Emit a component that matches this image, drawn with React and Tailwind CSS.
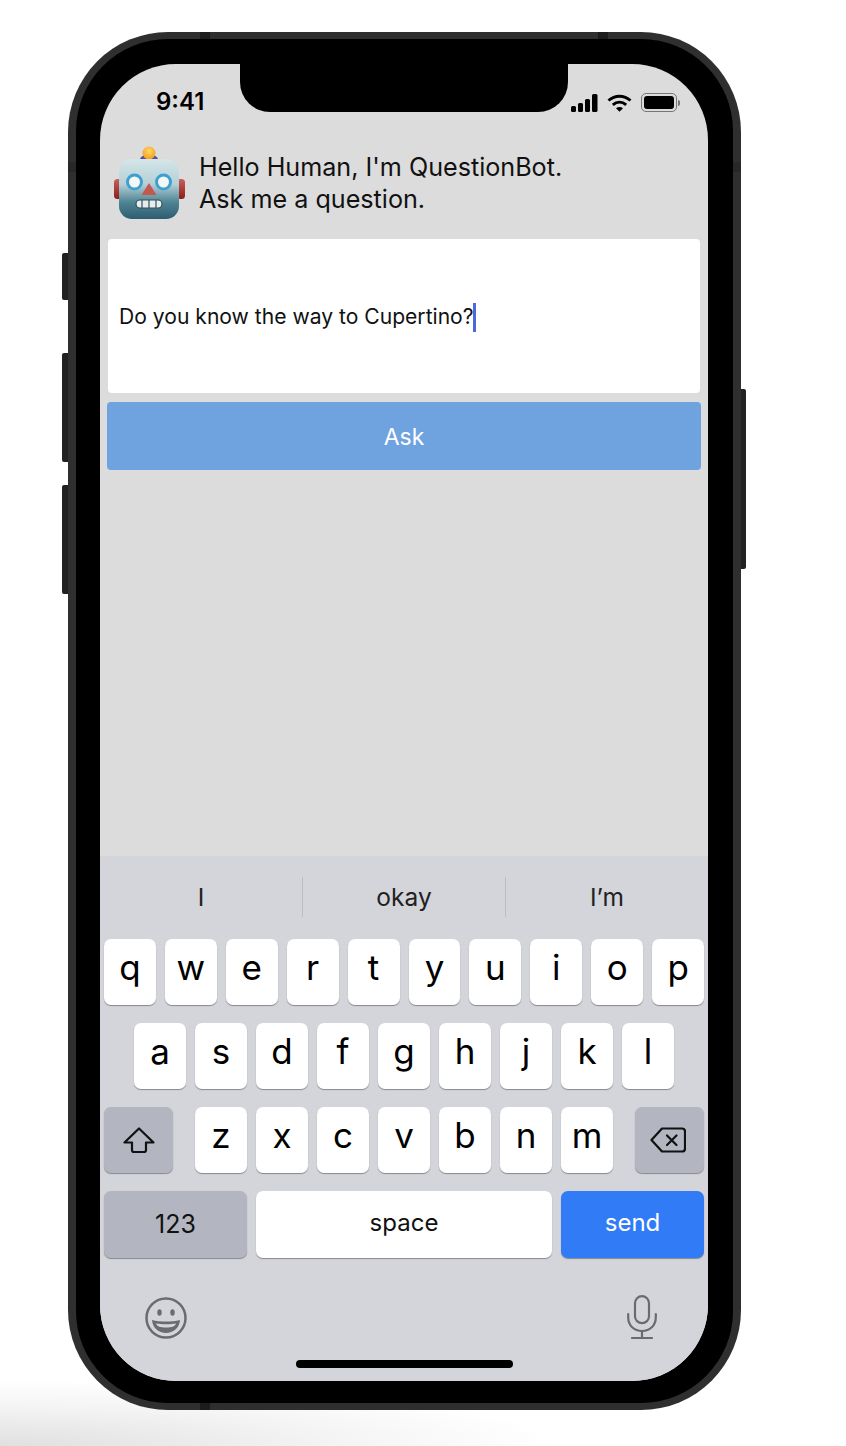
import React from "react";

const rows = [
  ["q", "w", "e", "r", "t", "y", "u", "i", "o", "p"],
  ["a", "s", "d", "f", "g", "h", "j", "k", "l"],
  ["z", "x", "c", "v", "b", "n", "m"],
];

function Key({ label }) {
  return (
    <div className="w-[52px] h-[66px] rounded-[7px] bg-white shadow-[0_1px_1px_#88898d] flex items-center justify-center text-[35px] leading-none font-[375] text-black pb-[9px]">
      {label}
    </div>
  );
}

function Robot() {
  return (
    <svg viewBox="113 145 73 75" className="w-[73px] h-[75px] shrink-0">
      <defs>
        <linearGradient id="head" x1="0" y1="0" x2="0" y2="1">
          <stop offset="0" stopColor="#d4e6e8" />
          <stop offset="0.42" stopColor="#b4d0d6" />
          <stop offset="0.72" stopColor="#4f8494" />
          <stop offset="1" stopColor="#2c5c70" />
        </linearGradient>
        <linearGradient id="ear" x1="0" y1="0" x2="0" y2="1">
          <stop offset="0" stopColor="#c9605a" />
          <stop offset="1" stopColor="#8a1d1a" />
        </linearGradient>
        <radialGradient id="knob" cx="0.5" cy="0.35" r="0.7">
          <stop offset="0" stopColor="#ffd75e" />
          <stop offset="1" stopColor="#ee9a1c" />
        </radialGradient>
      </defs>
      <rect x="114" y="178" width="8" height="20" rx="3.500" fill="url(#ear)" />
      <rect x="177" y="178" width="8" height="20" rx="3.500" fill="url(#ear)" />
      <path d="M140 158c1-3 5-4.500 9-4.500s8 1.500 9 4.500z" fill="#5f4f93" />
      <circle cx="149" cy="152" r="6.500" fill="url(#knob)" />
      <rect x="119" y="158" width="60" height="60" rx="13" fill="url(#head)" />
      <circle cx="134.500" cy="181" r="7" fill="#f2f7f8" stroke="#3fa0cf" strokeWidth="3" />
      <circle cx="163.500" cy="181" r="7" fill="#f2f7f8" stroke="#3fa0cf" strokeWidth="3" />
      <path d="M149 182l7.500 12h-15z" fill="#c4584f" />
      <rect x="136" y="199" width="26" height="8" rx="4" fill="#e8eeee" stroke="#33505c" strokeWidth="1.200" />
      <path d="M142 199v8M149 199v8M156 199v8" stroke="#33505c" strokeWidth="1.200" />
    </svg>
  );
}

function StatusIcons() {
  return (
    <div className="flex items-center gap-[9px]">
      <svg viewBox="0 0 27 18" className="w-[27px] h-[18px]" fill="#000">
        <rect x="0" y="12" width="5" height="6" rx="1.500" />
        <rect x="7" y="9" width="5" height="9" rx="1.500" />
        <rect x="14" y="5" width="5" height="13" rx="1.500" />
        <rect x="21" y="0" width="5.500" height="18" rx="1.500" />
      </svg>
      <svg viewBox="0 0 25 18" className="w-[25px] h-[18px]" fill="none" stroke="#000" strokeWidth="3">
        <path d="M1.500 6.500c6.500-5.800 15.500-5.800 22 0" />
        <path d="M5.800 10.800c4-3.400 9.400-3.400 13.400 0" />
        <path d="M12.500 17.800l3.500-3.600c-2-1.600-5-1.600-7 0z" fill="#000" stroke="none" />
      </svg>
      <div className="flex items-center gap-[1px]">
        <div className="w-[36px] h-[19px] rounded-[5px] border border-[#77777a] p-[2px]">
          <div className="w-full h-full rounded-[3px] bg-black" />
        </div>
        <div className="w-[2px] h-[6px] rounded-r bg-[#77777a]" />
      </div>
    </div>
  );
}

export default function App() {
  return (
    <div className="relative w-[846px] h-[1446px] overflow-hidden bg-white font-['Inter',sans-serif]">
      {/* Soft shadow under the phone */}
      <div className="absolute left-0 top-[1380px] w-[560px] h-[66px] bg-[radial-gradient(ellipse_100%_100%_at_0%_100%,#e0e0e0,#f4f4f4_60%,#ffffff_100%)]" />

      <div className="relative ml-[68px] mt-[32px] w-[673px] h-[1378px] rounded-[100px] bg-[#2f2f2f] px-[8px] py-[7px]">
        {/* Side buttons */}
        <div className="absolute left-[-6px] top-[221px] w-[6px] h-[47px] rounded-l-[2px] bg-[#222]" />
        <div className="absolute left-[-6px] top-[321px] w-[6px] h-[109px] rounded-l-[2px] bg-[#222]" />
        <div className="absolute left-[-6px] top-[453px] w-[6px] h-[109px] rounded-l-[2px] bg-[#222]" />
        <div className="absolute right-[-5px] top-[357px] w-[5px] h-[180px] rounded-r-[2px] bg-[#222]" />

        {/* Antenna bands */}
        <div className="absolute left-[132px] top-0 w-[10px] h-[7px] bg-[#1c1c1c]" />
        <div className="absolute left-[530px] top-0 w-[10px] h-[7px] bg-[#1c1c1c]" />
        <div className="absolute left-[132px] bottom-0 w-[10px] h-[7px] bg-[#1c1c1c]" />
        <div className="absolute left-0 top-[130px] w-[8px] h-[10px] bg-[#282828]" />
        <div className="absolute right-0 top-[130px] w-[8px] h-[10px] bg-[#282828]" />

        <div className="relative w-[657px] h-[1364px] rounded-[92px] bg-black pl-[24px] pt-[25px]">
          <div className="relative w-[608px] h-[1317px] rounded-[76px] overflow-hidden bg-[#dcdcdc] flex flex-col">
            {/* Notch */}
            <div className="absolute left-[140px] top-0 w-[328px] h-[48px] bg-black rounded-b-[30px]" />

            <div className="h-[73px] shrink-0 pl-[56px] pr-[28px] pt-[26px] flex items-start justify-between">
              <span className="text-[24px] leading-[24px] font-semibold text-black">9:41</span>
              <div className="pt-[3px]">
                <StatusIcons />
              </div>
            </div>

            <div className="flex items-start h-[102px] pl-[13px] pt-[9px] gap-[13px] text-[25.15px] leading-[31.5px] text-[#111]">
              <Robot />
              <div className="pt-[6px]">
                <div>Hello Human, I'm QuestionBot.</div>
                <div>Ask me a question.</div>
              </div>
            </div>

            <div className="mx-[8px] h-[154px] rounded-[4px] bg-white flex items-center px-[11px] text-[21.1px] text-[#111] pt-[2px]">
              <span>Do you know the way to Cupertino?</span>
              <span className="w-[3px] h-[29px] -ml-[1px] bg-[#4c68dd]" />
            </div>

            <div className="mx-[7px] mt-[9px] h-[68px] rounded-[4px] bg-[#6fa3e0] flex items-center justify-center text-[23px] text-white pt-[2px]">
              Ask
            </div>

            <div className="flex-1" />

            {/* Keyboard */}
            <div className="h-[525px] shrink-0 bg-[#d3d5da] px-[4px] flex flex-col">
              <div className="h-[83px] shrink-0 grid grid-cols-[202px_204px_202px] items-center text-[24.5px] text-[#222] pb-[2px] -mx-[4px]">
                <div className="text-center h-[40px] leading-[40px]">I</div>
                <div className="text-center h-[40px] leading-[40px] border-x border-[#bcbdc2]">okay</div>
                <div className="text-center h-[40px] leading-[40px]">I’m</div>
              </div>

              <div className="flex flex-col gap-[18px]">
                <div className="flex gap-[9px]">
                  {rows[0].map((k) => (
                    <Key key={k} label={k} />
                  ))}
                </div>
                <div className="flex gap-[9px] justify-center">
                  {rows[1].map((k) => (
                    <Key key={k} label={k} />
                  ))}
                </div>
                <div className="flex justify-between">
                  <div className="w-[69px] h-[66px] rounded-[7px] bg-[#b3b6c0] shadow-[0_1px_1px_#88898d] flex items-center justify-center">
                    <svg viewBox="0 0 32 27" className="w-[32px] h-[27px]" fill="none" stroke="#111" strokeWidth="2.200" strokeLinejoin="round">
                      <path d="M16 1.500L1.500 15.500h7.500v7.500a2 2 0 0 0 2 2h10a2 2 0 0 0 2-2v-7.500h7.500z" />
                    </svg>
                  </div>
                  <div className="flex gap-[9px]">
                    {rows[2].map((k) => (
                      <Key key={k} label={k} />
                    ))}
                  </div>
                  <div className="w-[69px] h-[66px] rounded-[7px] bg-[#b3b6c0] shadow-[0_1px_1px_#88898d] flex items-center justify-center pr-[3px]">
                    <svg viewBox="0 0 36 26" className="w-[36px] h-[26px]" fill="none" stroke="#111" strokeWidth="2.200" strokeLinejoin="round" strokeLinecap="round">
                      <path d="M12 1.500h20a3 3 0 0 1 3 3v17a3 3 0 0 1-3 3H12L1.500 13z" />
                      <path d="M17 8.500l9.500 9.500M26.500 8.500L17 18" />
                    </svg>
                  </div>
                </div>
                <div className="flex gap-[9px] h-[67px]">
                  <div className="w-[143px] rounded-[7px] bg-[#b3b6c0] shadow-[0_1px_1px_#88898d] flex items-center justify-center text-[25px] text-[#111]">
                    123
                  </div>
                  <div className="w-[296px] rounded-[7px] bg-white shadow-[0_1px_1px_#88898d] flex items-center justify-center text-[24px] text-[#111] pb-[3px]">
                    space
                  </div>
                  <div className="w-[143px] rounded-[7px] bg-[#317cf6] shadow-[0_1px_1px_#88898d] flex items-center justify-center text-[24px] text-white pb-[3px]">
                    send
                  </div>
                </div>
              </div>

              <div className="flex items-start justify-between pl-[41px] pr-[47px] pt-[37px]">
                <svg viewBox="0 0 42 42" className="w-[42px] h-[42px] mt-[2px]">
                  <circle cx="21" cy="21" r="19.500" fill="none" stroke="#6a6b6f" strokeWidth="2.500" />
                  <ellipse cx="14.500" cy="15.500" rx="2.200" ry="3.200" fill="#6a6b6f" />
                  <ellipse cx="27.500" cy="15.500" rx="2.200" ry="3.200" fill="#6a6b6f" />
                  <path d="M7 23c8 2 20 2 28 0-.5 8-7 13-14 13S7.500 31 7 23z" fill="#6a6b6f" />
                  <path d="M11 26.500c6 1 14 1 20 0-1 3-4 4-10 4s-9-1-10-4z" fill="#d3d5da" />
                </svg>
                <svg viewBox="0 0 30 44" className="w-[30px] h-[44px]" fill="none" stroke="#6a6b6f" strokeWidth="2.200" strokeLinecap="round">
                  <rect x="8" y="1.200" width="14" height="27" rx="7" />
                  <path d="M1.200 19v3.500c0 8 6 13.500 13.800 13.500s13.800-5.500 13.800-13.500V19" />
                  <path d="M15 36v7M5 43h20" />
                </svg>
              </div>
            </div>

            {/* Home indicator */}
            <div className="absolute left-[196px] bottom-[13px] w-[217px] h-[8px] rounded-full bg-black" />
          </div>
        </div>
      </div>
    </div>
  );
}
